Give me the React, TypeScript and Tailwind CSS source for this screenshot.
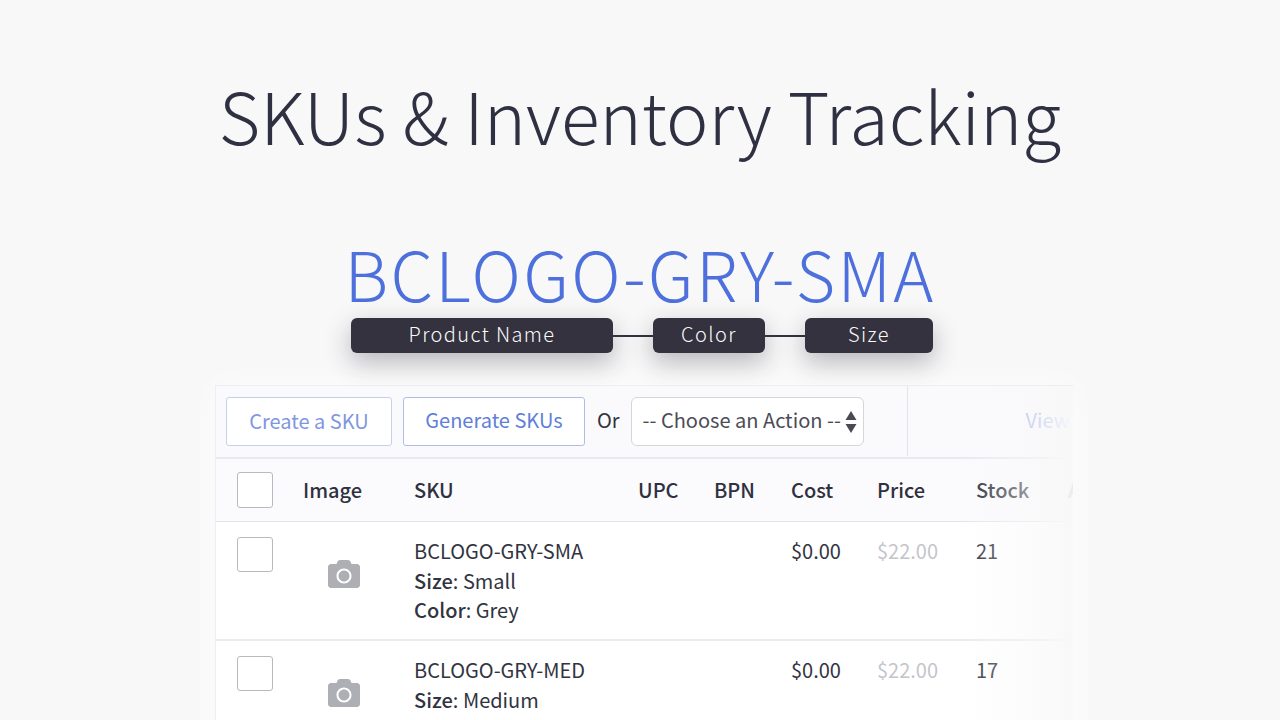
import { FaCamera } from "react-icons/fa";

const FONT = '"Noto Sans CJK JP", "Noto Sans", sans-serif';

const rows = [
  { sku: "BCLOGO-GRY-SMA", size: "Small", color: "Grey", stock: "21" },
  { sku: "BCLOGO-GRY-MED", size: "Medium", color: "Grey", stock: "17" },
];

const columns = "grid grid-cols-[66px_111px_224px_76px_77px_86px_99px_92px_1fr]";

function Pill({ label, width }: { label: string; width: string }) {
  return (
    <div
      className={`${width} h-[35px] rounded-md bg-[#33323e] text-[#fafafc] text-[20px] leading-[32px] font-light tracking-[1.4px] text-center shadow-[0_9px_26px_rgba(30,30,40,0.3)]`}
    >
      {label}
    </div>
  );
}

export default function App() {
  return (
    <div
      className="w-[1280px] h-[720px] overflow-hidden bg-[#f8f8f9] text-[#313440]"
      style={{ fontFamily: FONT }}
    >
      <h1 className="pt-[66px] h-[231px] text-center text-[71.5px] leading-[96px] font-light text-[#2f3142]">
        SKUs &amp; Inventory Tracking
      </h1>

      <div className="h-[87px] text-center text-[68px] leading-[84px] font-light tracking-[2.3px] text-[#4e70dc]">
        BCLOGO-GRY-SMA
      </div>

      <div className="flex items-center ml-[351px] relative z-10">
        <Pill label="Product Name" width="w-[262px]" />
        <div className="w-10 h-0.5 bg-[#33323e]" />
        <Pill label="Color" width="w-[112px]" />
        <div className="w-10 h-0.5 bg-[#33323e]" />
        <Pill label="Size" width="w-[128px]" />
      </div>

      <div className="relative ml-[215px] mt-8 w-[858px] h-[400px] overflow-hidden border-l border-t border-[#ededf2] bg-white shadow-[0_0_30px_rgba(255,255,255,0.8)]">
        {/* toolbar */}
        <div className="flex items-center h-[73px] pl-[10px] bg-[#fafafc] text-[20px] border-b-2 border-[#e9eaf0]">
          <button className="w-[166px] h-[49px] pb-px rounded-[3px] border border-[#c6cff0] bg-white text-[#7f97e0]">
            Create a SKU
          </button>
          <button className="ml-[11px] w-[182px] h-[49px] pb-[3px] rounded-[3px] border border-[#b0bdeb] bg-white text-[#5f7fd8]">
            Generate SKUs
          </button>
          <span className="ml-3 pb-[3px] text-[#33343f]">Or</span>
          <div className="ml-[11px] w-[233px] h-[49px] rounded-md border border-[#d5d5da] bg-white flex items-center justify-between pl-[11px] pr-1.5 text-[#4b4c57]">
            <span className="pb-[3px] whitespace-nowrap">-- Choose an Action --</span>
            <svg width="12" height="22" viewBox="0 0 12 22" fill="#4a4a55">
              <path d="M6 0l5.5 9H.5z" />
              <path d="M6 22L.5 13h11z" />
            </svg>
          </div>
          <div className="ml-[43px] w-px h-[70px] self-start bg-[#e4e5ea]" />
          <span className="ml-[118px] pb-[3px] text-[#9fb0ea]">View</span>
        </div>

        {/* header row */}
        <div className={`${columns} h-[63px] items-center pl-[21px] pb-px bg-[#fbfbfd] text-[20px] font-medium border-b border-[#e4e5ee] text-[#2f3140]`}>
          <div className="w-9 h-9 rounded-[3px] border border-[#b9b9c0] bg-white" />
          <span>Image</span>
          <span>SKU</span>
          <span>UPC</span>
          <span>BPN</span>
          <span>Cost</span>
          <span>Price</span>
          <span>Stock</span>
          <span className="relative z-10 text-[#ebebef]">A</span>
        </div>

        {/* sku rows */}
        {rows.map((row) => (
          <div key={row.sku} className={`${columns} h-[119px] pl-[21px] pt-[14px] bg-white text-[20px] leading-[29.5px] border-b-2 border-[#ececf0]`}>
            <div className="w-9 h-[35px] mt-px rounded-[3px] border border-[#b9b9c0] bg-white" />
            <div className="pl-[25px] pt-[22px]">
              <FaCamera className="text-[#aeaeb5]" size={32} />
            </div>
            <div className="whitespace-nowrap">
              <div>{row.sku}</div>
              <div>
                <span className="font-medium">Size</span>: {row.size}
              </div>
              <div>
                <span className="font-medium">Color</span>: {row.color}
              </div>
            </div>
            <div />
            <div />
            <div>$0.00</div>
            <div className="text-[#c4c5cb]">$22.00</div>
            <div>{row.stock}</div>
          </div>
        ))}

        {/* fade-out over the right side of the panel */}
        <div className="absolute -top-px bottom-0 right-0 w-[110px] bg-gradient-to-r from-transparent via-[#f8f8f9]/60 via-70% to-[#f8f8f9]" />
      </div>
    </div>
  );
}
